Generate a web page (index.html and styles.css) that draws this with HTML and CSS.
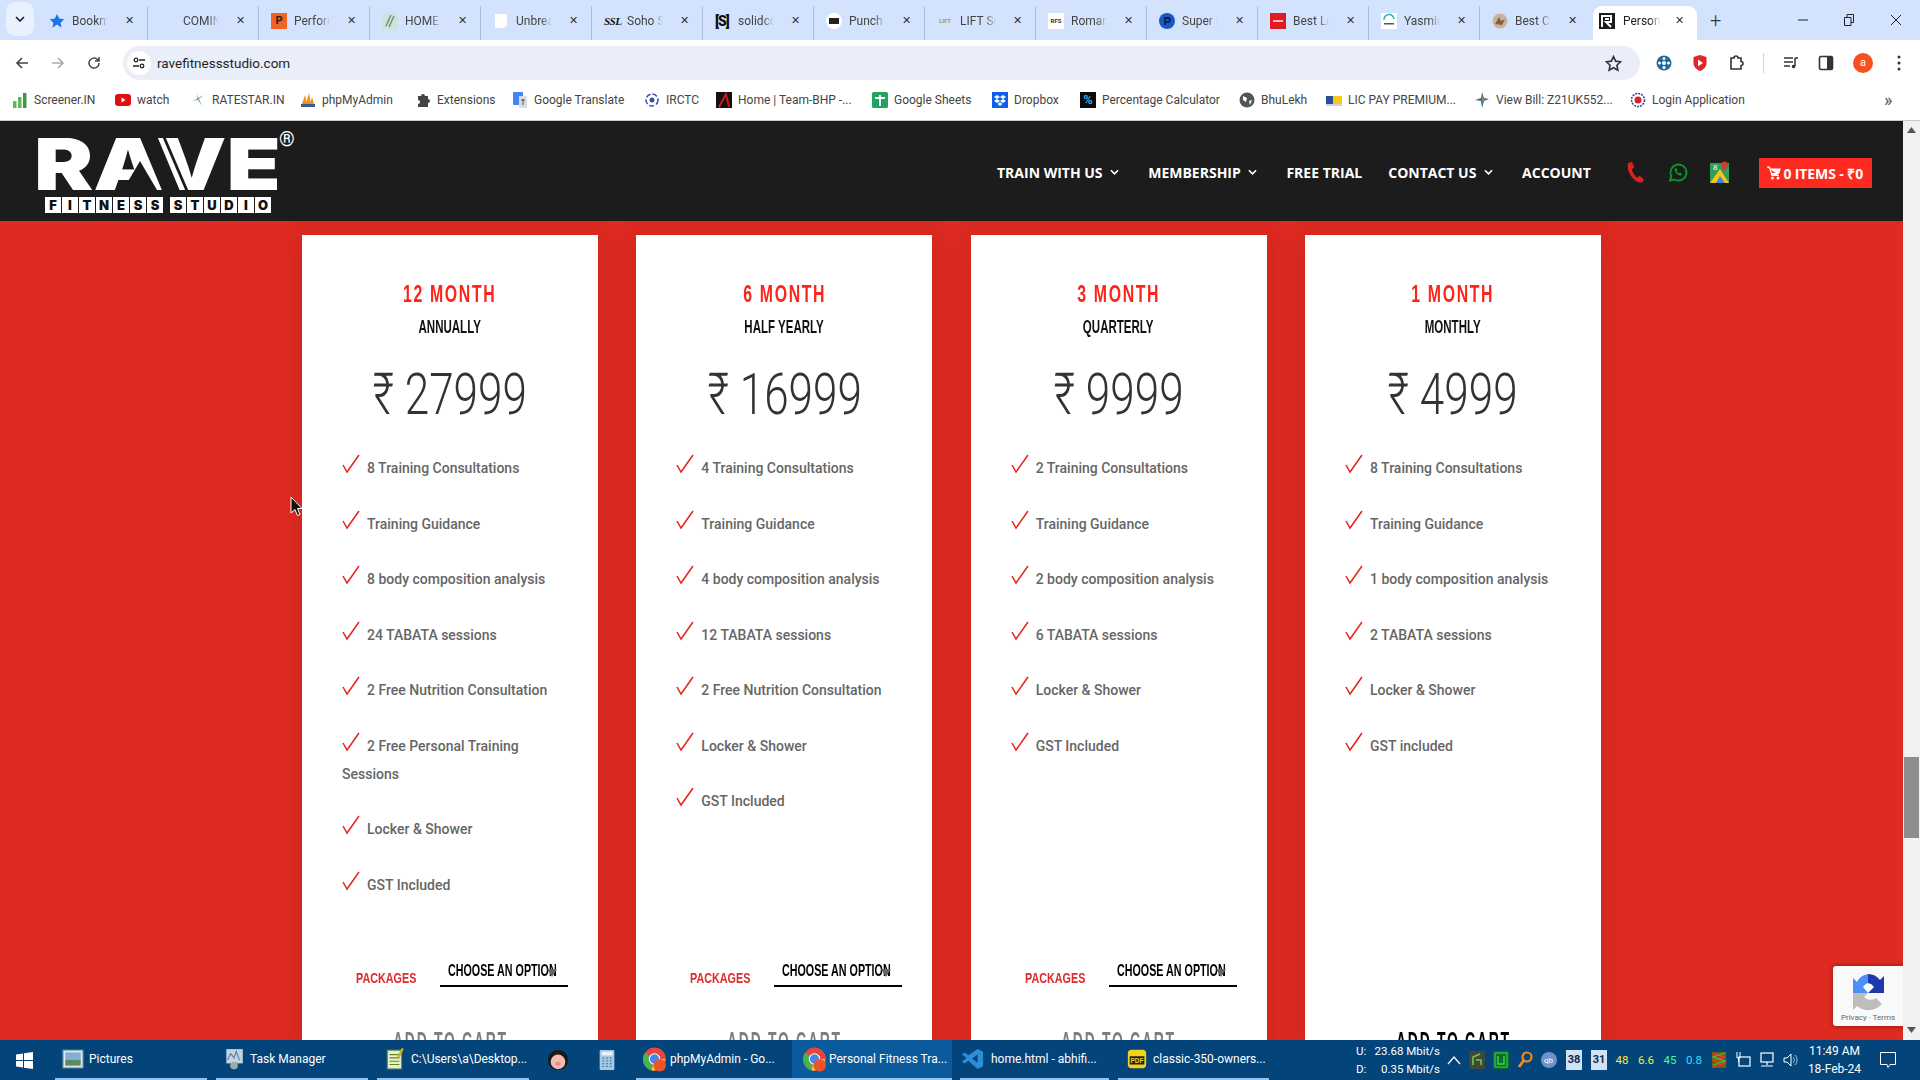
FILE: index.html
```html
<!DOCTYPE html>
<html lang="en">
<head>
<meta charset="utf-8">
<title>Personal Fitness Training</title>
<link rel="stylesheet" href="styles.css">
</head>
<body>
<div class="tabstrip">
  <div class="tabsearch"><svg width="10" height="6" viewBox="0 0 10 6"><path d="M1 1l4 4 4-4" fill="none" stroke="#1f1f1f" stroke-width="1.6"/></svg></div>
  <div class="tab"><svg class="fav" viewBox="0 0 16 16"><path d="M8 1l2.2 4.6 5 .7-3.6 3.5.9 5L8 11.4 3.500 14.800l.9-5L.8 6.300l5-.7z" fill="#1a73e8"/></svg><span class="tabt">Bookmarks</span><span class="x">✕</span></div>
  <div class="tab"><span class="fav"></span><span class="tabt">COMING SOON</span><span class="x">✕</span></div>
  <div class="tab"><span class="fav sq orange">P</span><span class="tabt">Performance</span><span class="x">✕</span></div>
  <div class="tab"><svg class="fav" viewBox="0 0 16 16"><rect width="16" height="16" fill="#cfe3da"/><path d="M4 13L9 2M7 14l5-11" stroke="#6d8a7c" stroke-width="1.400"/></svg><span class="tabt">HOME | Site</span><span class="x">✕</span></div>
  <div class="tab"><svg class="fav" viewBox="0 0 16 16"><path d="M2 1h12v12l-4 2H2z" fill="#fff"/></svg><span class="tabt">Unbreakable</span><span class="x">✕</span></div>
  <div class="tab"><span class="fav ssl">SSL</span><span class="tabt">Soho Studio</span><span class="x">✕</span></div>
  <div class="tab"><span class="fav brk">[S]</span><span class="tabt">solidcore</span><span class="x">✕</span></div>
  <div class="tab"><svg class="fav" viewBox="0 0 16 16"><circle cx="8" cy="8" r="8" fill="#fff"/><rect x="3" y="5" width="10" height="6" fill="#222"/></svg><span class="tabt">Punch Fitness</span><span class="x">✕</span></div>
  <div class="tab"><span class="fav tiny">LIFT</span><span class="tabt">LIFT Society</span><span class="x">✕</span></div>
  <div class="tab"><span class="fav tiny dark">RFS</span><span class="tabt">Roman Fitness</span><span class="x">✕</span></div>
  <div class="tab"><svg class="fav" viewBox="0 0 16 16"><circle cx="8" cy="8" r="8" fill="#1a56c4"/><path d="M6 12V5h3a2 2 0 010 4H6" fill="none" stroke="#061f55" stroke-width="1.800"/></svg><span class="tabt">Super 6 Gym</span><span class="x">✕</span></div>
  <div class="tab"><svg class="fav" viewBox="0 0 16 16"><rect width="16" height="16" fill="#e01b24"/><rect x="3" y="7" width="10" height="2" fill="#f6b7b7"/></svg><span class="tabt">Best Luxury</span><span class="x">✕</span></div>
  <div class="tab"><svg class="fav" viewBox="0 0 16 16"><rect width="16" height="16" fill="#fff"/><path d="M3 7a5 5 0 0110-1" fill="none" stroke="#2cb7a5" stroke-width="1.500"/><rect x="3" y="10" width="10" height="1.500" fill="#555"/></svg><span class="tabt">Yasmin Karachi</span><span class="x">✕</span></div>
  <div class="tab"><svg class="fav" viewBox="0 0 16 16"><circle cx="8" cy="8" r="7.500" fill="#c9b3a0"/><path d="M3 11l4-7 2 4 4-2-3 6z" fill="#8a5a3c"/></svg><span class="tabt">Best Celebrity</span><span class="x">✕</span></div>
  <div class="tab tab-active"><svg class="fav" viewBox="0 0 16 16"><rect width="16" height="16" fill="#1c1c1c"/><path d="M3 14V3h9v6H7l5 5M6 6h4" fill="none" stroke="#fff" stroke-width="2"/></svg><span class="tabt">Personal Fitness</span><span class="x">✕</span></div>
  <span class="plus">+</span>
  <div class="winctl">
    <svg width="10" height="10" viewBox="0 0 10 10"><path d="M0 5h10" stroke="#222"/></svg>
    <svg width="10" height="12" viewBox="0 0 10 12"><path d="M.5 3.500h6.500v8H.5zM3 3.500V.5h6.500v8H7" fill="none" stroke="#222"/></svg>
    <svg width="12" height="12" viewBox="0 0 12 12"><path d="M1 1l10 10M11 1L1 11" stroke="#222"/></svg>
  </div>
</div>

<div class="toolbar">
  <svg class="tb-ico" viewBox="0 0 16 16"><path d="M14 8H3M8 3L3 8l5 5" fill="none" stroke="#444" stroke-width="1.600"/></svg>
  <svg class="tb-ico" viewBox="0 0 16 16"><path d="M2 8h11M8 3l5 5-5 5" fill="none" stroke="#aaa" stroke-width="1.600"/></svg>
  <svg class="tb-ico" viewBox="0 0 16 16"><path d="M13 8a5 5 0 11-1.500-3.500L13 6M13 2v4H9" fill="none" stroke="#444" stroke-width="1.500"/></svg>
  <div class="omnibox">
    <span class="tune"><svg width="14" height="14" viewBox="0 0 14 14"><g fill="none" stroke="#222" stroke-width="1.300"><circle cx="4" cy="4" r="1.800"/><path d="M7 4h6M1 10h6"/><circle cx="10" cy="10" r="1.800"/></g></svg></span>
    <span class="url">ravefitnessstudio.com</span>
    <svg class="star" viewBox="0 0 16 16"><path d="M8 1.500l2 4.300 4.700.6-3.500 3.200.9 4.700L8 12l-4.100 2.300.9-4.700L1.300 6.400 6 5.800z" fill="none" stroke="#333" stroke-width="1.500"/></svg>
  </div>
  <div class="tb-right">
    <svg class="r1" viewBox="0 0 16 16"><circle cx="8" cy="8" r="7.500" fill="#1f6a96"/><circle cx="8" cy="8" r="2" fill="#fff"/><circle cx="8" cy="3.500" r="1.500" fill="#fff"/><circle cx="8" cy="12.500" r="1.500" fill="#fff"/><circle cx="3.500" cy="8" r="1.500" fill="#fff"/><circle cx="12.500" cy="8" r="1.500" fill="#fff"/></svg>
    <svg class="r2" viewBox="0 0 16 16"><path d="M1.500 2L8 0l6.500 2v6c0 4-3 6.500-6.500 8C4.500 14.500 1.500 12 1.500 8z" fill="#e3242b"/><path d="M6 4.500l5 3.500-5 3.500z" fill="#fff"/></svg>
    <svg class="r3" viewBox="0 0 16 16"><path d="M3 3h3a2 2 0 014 0h3v3.500a2 2 0 010 4V14H3z" fill="none" stroke="#333" stroke-width="1.600"/></svg>
    <span class="sep"></span>
    <svg class="r4" viewBox="0 0 16 16"><path d="M1 3h9M1 7h9M1 11h6M12 3h3M12 3v8" fill="none" stroke="#333" stroke-width="1.500"/><circle cx="10.500" cy="11.500" r="1.800" fill="#333"/></svg>
    <svg class="r5" viewBox="0 0 16 16"><rect x="1.500" y="1.500" width="13" height="13" rx="1.500" fill="none" stroke="#333" stroke-width="1.600"/><rect x="9" y="2" width="5" height="12" fill="#333"/></svg>
    <span class="avatar">a</span>
    <svg class="r6" viewBox="0 0 4 16"><circle cx="2" cy="2" r="1.500" fill="#333"/><circle cx="2" cy="8" r="1.500" fill="#333"/><circle cx="2" cy="14" r="1.500" fill="#333"/></svg>
  </div>
</div>

<div class="bookmarks">
  <span class="bm"><svg viewBox="0 0 16 16"><rect x="1" y="9" width="3.500" height="7" fill="#5cb85c"/><rect x="6" y="5" width="3.500" height="11" fill="#5cb85c"/><rect x="11" y="1" width="3.500" height="15" fill="#3f9a3f"/></svg>Screener.IN</span>
  <span class="bm"><svg viewBox="0 0 16 16"><rect y="2" width="16" height="12" rx="3" fill="#e01010"/><path d="M6.500 5.500l4 2.500-4 2.500z" fill="#fff"/></svg>watch</span>
  <span class="bm"><svg viewBox="0 0 16 16"><path d="M8 1l-1 6-5 2 6-1 4 6-3-7 5-4-6 3z" fill="#7d9fb8"/></svg>RATESTAR.IN</span>
  <span class="bm"><svg viewBox="0 0 16 16"><path d="M2 12L5 3l2 9zM6 12l3-11 2 11zM10 12l2-7 2 7z" fill="#f29111"/><rect x="1" y="12" width="14" height="3" fill="#3a5a98"/></svg>phpMyAdmin</span>
  <span class="bm"><svg viewBox="0 0 16 16"><path d="M3 4h3a2 2 0 014 0h3v3a2 2 0 010 4v4H3v-3a2 2 0 000-4z" fill="#444"/></svg>Extensions</span>
  <span class="bm"><svg viewBox="0 0 16 16"><rect x="1" y="0" width="10" height="13" rx="1" fill="#4285f4"/><rect x="7" y="4" width="8" height="12" rx="1" fill="#dadce0"/><path d="M9 8h4M11 7v6" stroke="#555"/></svg>Google Translate</span>
  <span class="bm"><svg viewBox="0 0 16 16"><circle cx="8" cy="8" r="6" fill="none" stroke="#3a4fa0" stroke-width="1.500" stroke-dasharray="5 2"/><circle cx="8" cy="8" r="2.500" fill="#3a4fa0"/></svg>IRCTC</span>
  <span class="bm"><svg viewBox="0 0 16 16"><rect width="16" height="16" fill="#111"/><path d="M3 15L10 2l3 13" fill="none" stroke="#d01818" stroke-width="2"/></svg>Home | Team-BHP -...</span>
  <span class="bm"><svg viewBox="0 0 16 16"><rect width="16" height="16" rx="1.500" fill="#1fa463"/><path d="M3 6h10M8 3v11" stroke="#fff" stroke-width="1.800"/></svg>Google Sheets</span>
  <span class="bm"><svg viewBox="0 0 16 16"><rect width="16" height="16" fill="#0d5fe8"/><path d="M5 3l3 2-3 2-3-2zM11 3l3 2-3 2-3-2zM5 7l3 2-3 2-3-2zM11 7l3 2-3 2-3-2zM8 10l2.500 2L8 14l-2.500-2z" fill="#fff"/></svg>Dropbox</span>
  <span class="bm"><span class="pct">%</span>Percentage Calculator</span>
  <span class="bm"><svg viewBox="0 0 16 16"><circle cx="8" cy="8" r="7.500" fill="#555"/><path d="M4 4l4 2-1 4-3-2zM10 9l3-1-2 5z" fill="#fff"/></svg>BhuLekh</span>
  <span class="bm"><svg viewBox="0 0 16 16"><rect y="4" width="7" height="8" fill="#2a4d9c"/><rect x="7" y="4" width="9" height="8" fill="#f6c915"/><rect x="0" y="12" width="16" height="2" fill="#c9d4ea"/></svg>LIC PAY PREMIUM...</span>
  <span class="bm"><svg viewBox="0 0 16 16"><path d="M8 0l2 6 5 1-5 2-2 7-1-7-6-1 6-2z" fill="#2176ae"/><path d="M8 2l1 5 3 1-4 1z" fill="#e9751e"/></svg>View Bill: Z21UK552...</span>
  <span class="bm"><svg viewBox="0 0 16 16"><circle cx="8" cy="8" r="6.500" fill="#fff" stroke="#2a3f9a" stroke-width="1.500" stroke-dasharray="2 1"/><circle cx="8" cy="8" r="3.500" fill="#d8232a"/></svg>Login Application</span>
  <span class="bm-more">»</span>
</div>

<div class="page">
  <div class="viewport">
    <header class="site-head">
      <div class="logo">
        <svg class="rave" viewBox="0 0 241 52"><text x="-3" y="52" textLength="247" lengthAdjust="spacingAndGlyphs" class="rave-t">RAVE</text><path class="rave-cut" d="M86 52l17-29 17 29z"/><path class="rave-cut" d="M125 -2l24 56h3L128 -2z"/></svg>
        <span class="reg">®</span>
        <div class="fs">
          <span>F</span><span>I</span><span>T</span><span>N</span><span>E</span><span>S</span><span>S</span><i></i><span>S</span><span>T</span><span>U</span><span>D</span><span>I</span><span>O</span>
        </div>
      </div>
      <nav class="nav">
        <a>TRAIN WITH US <svg class="chev" viewBox="0 0 10 7"><path d="M1 1l4 4 4-4" fill="none" stroke="#fff" stroke-width="1.800"/></svg></a>
        <a>MEMBERSHIP <svg class="chev" viewBox="0 0 10 7"><path d="M1 1l4 4 4-4" fill="none" stroke="#fff" stroke-width="1.800"/></svg></a>
        <a>FREE TRIAL</a>
        <a>CONTACT US <svg class="chev" viewBox="0 0 10 7"><path d="M1 1l4 4 4-4" fill="none" stroke="#fff" stroke-width="1.800"/></svg></a>
        <a>ACCOUNT</a>
      </nav>
      <div class="contact-ico">
        <svg width="21" height="21" viewBox="0 0 20 20"><path d="M3 1l3.500-1 2.500 5-2.500 2c.5 3 2.500 6 5 8l2.500-2 4 3.500-1.500 3c-7 1.500-16-10-13.500-18.500z" fill="#d9231c"/></svg>
        <svg width="20" height="21" viewBox="0 0 20 20"><path d="M2 18l1.300-4.500A8 8 0 1110 18a8 8 0 01-3.700-1z" fill="none" stroke="#0a9a2c" stroke-width="1.800"/><path d="M7 6c-1.500 2 2.500 7.500 6 7l1-1.500-2-1.500-1 1c-1-.5-2-1.500-2.500-2.500l1-1-1.200-2z" fill="#0a9a2c"/></svg>
        <svg width="22" height="23" viewBox="0 0 22 23"><rect y="2" width="19" height="20" fill="#2e9e5b"/><path d="M0 22L10 8l9 14z" fill="#f3c614"/><path d="M6 22l4-7 5 7z" fill="#3f82e0"/><path d="M14 10c-3-4-3-5-3-6a3.500 3.500 0 017 0c0 2-2 4-4 6z" fill="#c8402f"/><text x="3" y="9" class="g8">8</text></svg>
      </div>
      <div class="cart"><svg width="14" height="14" viewBox="0 0 14 14"><path d="M0 1h2.500L5 9.500h7M3 3h10l-1.500 4.500H4.200" fill="#fff" stroke="#fff" stroke-width="1.200"/><circle cx="5.500" cy="12" r="1.500" fill="#fff"/><circle cx="11" cy="12" r="1.500" fill="#fff"/></svg>0 ITEMS - ₹0</div>
    </header>

    <main class="pricing">
      <section class="card">
        <h3 class="term"><span>12 MONTH</span></h3>
        <p class="sub"><span>ANNUALLY</span></p>
        <p class="price"><span>₹ 27999</span></p>
        <ul class="feat">
          <li><svg class="chk" viewBox="0 0 18 20"><path d="M1 11l4 7L17 1" fill="none" stroke="#e8221a" stroke-width="1.500"/></svg>8 Training Consultations</li>
          <li><svg class="chk" viewBox="0 0 18 20"><path d="M1 11l4 7L17 1" fill="none" stroke="#e8221a" stroke-width="1.500"/></svg>Training Guidance</li>
          <li><svg class="chk" viewBox="0 0 18 20"><path d="M1 11l4 7L17 1" fill="none" stroke="#e8221a" stroke-width="1.500"/></svg>8 body composition analysis</li>
          <li><svg class="chk" viewBox="0 0 18 20"><path d="M1 11l4 7L17 1" fill="none" stroke="#e8221a" stroke-width="1.500"/></svg>24 TABATA sessions</li>
          <li><svg class="chk" viewBox="0 0 18 20"><path d="M1 11l4 7L17 1" fill="none" stroke="#e8221a" stroke-width="1.500"/></svg>2 Free Nutrition Consultation</li>
          <li><svg class="chk" viewBox="0 0 18 20"><path d="M1 11l4 7L17 1" fill="none" stroke="#e8221a" stroke-width="1.500"/></svg>2 Free Personal Training Sessions</li>
          <li><svg class="chk" viewBox="0 0 18 20"><path d="M1 11l4 7L17 1" fill="none" stroke="#e8221a" stroke-width="1.500"/></svg>Locker &amp; Shower</li>
          <li><svg class="chk" viewBox="0 0 18 20"><path d="M1 11l4 7L17 1" fill="none" stroke="#e8221a" stroke-width="1.500"/></svg>GST Included</li>
        </ul>
        <div class="opt"><span class="pk"><b>PACKAGES</b></span><span class="sel"><b>CHOOSE AN OPTION</b><svg class="arr" viewBox="0 0 10 8"><path d="M0 0h10L5 8z" fill="#666"/></svg></span></div>
        <div class="add off"><span>ADD TO CART</span></div>
      </section>
      <section class="card">
        <h3 class="term"><span>6 MONTH</span></h3>
        <p class="sub"><span>HALF YEARLY</span></p>
        <p class="price"><span>₹ 16999</span></p>
        <ul class="feat">
          <li><svg class="chk" viewBox="0 0 18 20"><path d="M1 11l4 7L17 1" fill="none" stroke="#e8221a" stroke-width="1.500"/></svg>4 Training Consultations</li>
          <li><svg class="chk" viewBox="0 0 18 20"><path d="M1 11l4 7L17 1" fill="none" stroke="#e8221a" stroke-width="1.500"/></svg>Training Guidance</li>
          <li><svg class="chk" viewBox="0 0 18 20"><path d="M1 11l4 7L17 1" fill="none" stroke="#e8221a" stroke-width="1.500"/></svg>4 body composition analysis</li>
          <li><svg class="chk" viewBox="0 0 18 20"><path d="M1 11l4 7L17 1" fill="none" stroke="#e8221a" stroke-width="1.500"/></svg>12 TABATA sessions</li>
          <li><svg class="chk" viewBox="0 0 18 20"><path d="M1 11l4 7L17 1" fill="none" stroke="#e8221a" stroke-width="1.500"/></svg>2 Free Nutrition Consultation</li>
          <li><svg class="chk" viewBox="0 0 18 20"><path d="M1 11l4 7L17 1" fill="none" stroke="#e8221a" stroke-width="1.500"/></svg>Locker &amp; Shower</li>
          <li><svg class="chk" viewBox="0 0 18 20"><path d="M1 11l4 7L17 1" fill="none" stroke="#e8221a" stroke-width="1.500"/></svg>GST Included</li>
        </ul>
        <div class="opt"><span class="pk"><b>PACKAGES</b></span><span class="sel"><b>CHOOSE AN OPTION</b><svg class="arr" viewBox="0 0 10 8"><path d="M0 0h10L5 8z" fill="#666"/></svg></span></div>
        <div class="add off"><span>ADD TO CART</span></div>
      </section>
      <section class="card">
        <h3 class="term"><span>3 MONTH</span></h3>
        <p class="sub"><span>QUARTERLY</span></p>
        <p class="price"><span>₹ 9999</span></p>
        <ul class="feat">
          <li><svg class="chk" viewBox="0 0 18 20"><path d="M1 11l4 7L17 1" fill="none" stroke="#e8221a" stroke-width="1.500"/></svg>2 Training Consultations</li>
          <li><svg class="chk" viewBox="0 0 18 20"><path d="M1 11l4 7L17 1" fill="none" stroke="#e8221a" stroke-width="1.500"/></svg>Training Guidance</li>
          <li><svg class="chk" viewBox="0 0 18 20"><path d="M1 11l4 7L17 1" fill="none" stroke="#e8221a" stroke-width="1.500"/></svg>2 body composition analysis</li>
          <li><svg class="chk" viewBox="0 0 18 20"><path d="M1 11l4 7L17 1" fill="none" stroke="#e8221a" stroke-width="1.500"/></svg>6 TABATA sessions</li>
          <li><svg class="chk" viewBox="0 0 18 20"><path d="M1 11l4 7L17 1" fill="none" stroke="#e8221a" stroke-width="1.500"/></svg>Locker &amp; Shower</li>
          <li><svg class="chk" viewBox="0 0 18 20"><path d="M1 11l4 7L17 1" fill="none" stroke="#e8221a" stroke-width="1.500"/></svg>GST Included</li>
        </ul>
        <div class="opt"><span class="pk"><b>PACKAGES</b></span><span class="sel"><b>CHOOSE AN OPTION</b><svg class="arr" viewBox="0 0 10 8"><path d="M0 0h10L5 8z" fill="#666"/></svg></span></div>
        <div class="add off"><span>ADD TO CART</span></div>
      </section>
      <section class="card">
        <h3 class="term"><span>1 MONTH</span></h3>
        <p class="sub"><span>MONTHLY</span></p>
        <p class="price"><span>₹ 4999</span></p>
        <ul class="feat">
          <li><svg class="chk" viewBox="0 0 18 20"><path d="M1 11l4 7L17 1" fill="none" stroke="#e8221a" stroke-width="1.500"/></svg>8 Training Consultations</li>
          <li><svg class="chk" viewBox="0 0 18 20"><path d="M1 11l4 7L17 1" fill="none" stroke="#e8221a" stroke-width="1.500"/></svg>Training Guidance</li>
          <li><svg class="chk" viewBox="0 0 18 20"><path d="M1 11l4 7L17 1" fill="none" stroke="#e8221a" stroke-width="1.500"/></svg>1 body composition analysis</li>
          <li><svg class="chk" viewBox="0 0 18 20"><path d="M1 11l4 7L17 1" fill="none" stroke="#e8221a" stroke-width="1.500"/></svg>2 TABATA sessions</li>
          <li><svg class="chk" viewBox="0 0 18 20"><path d="M1 11l4 7L17 1" fill="none" stroke="#e8221a" stroke-width="1.500"/></svg>Locker &amp; Shower</li>
          <li><svg class="chk" viewBox="0 0 18 20"><path d="M1 11l4 7L17 1" fill="none" stroke="#e8221a" stroke-width="1.500"/></svg>GST included</li>
        </ul>
        <div class="opt"></div>
        <div class="add"><span>ADD TO CART</span></div>
      </section>
    </main>

    <svg class="cursor" width="13" height="21" viewBox="0 0 13 21"><path d="M1 1v16l4-3.500 2.500 6 2.500-1-2.500-6H12z" fill="#111" stroke="#fff"/></svg>

    <div class="recaptcha">
      <svg width="40" height="40" viewBox="0 0 40 40">
        <path d="M5 21V6l4 4A15 15 0 0120 2v9a9 9 0 00-5 4l5 6z" fill="#4a90f8"/>
        <path d="M20 2a15 15 0 0112 6l4-4v17H20l6-6a9 9 0 00-6-4z" fill="#1c3aa9"/>
        <path d="M5 21h15l-4 4a9 9 0 0012 1l6 6a18 18 0 01-25 2l-4 4z" fill="#bdbdbd"/>
      </svg>
      <span class="rc-t">Privacy · Terms</span>
    </div>
  </div>
  <div class="scrollbar">
    <svg width="9" height="6" viewBox="0 0 9 6"><path d="M4.500 0L9 6H0z" fill="#555"/></svg>
    <div class="track"><div class="thumb"></div></div>
    <svg width="9" height="6" viewBox="0 0 9 6"><path d="M0 0h9L4.500 6z" fill="#555"/></svg>
  </div>
</div>

<footer class="taskbar">
  <svg class="win" width="17" height="17" viewBox="0 0 17 17"><path d="M0 2.500l7-1v6.500H0zM8 1.300L17 0v8H8zM0 9h7v6.500l-7-1zM8 9h9v8l-9-1.300z" fill="#fff"/></svg>
  <div class="tk w152"><svg viewBox="0 0 20 20"><rect x="1" y="2" width="18" height="16" fill="#dfe8f2" stroke="#8aa"/><rect x="3" y="4" width="14" height="8" fill="#7fb0d8"/><rect x="3" y="11" width="14" height="5" fill="#5c8a5a"/></svg>Pictures</div>
  <div class="tk w152"><svg viewBox="0 0 20 20"><rect x="3" y="1" width="15" height="13" fill="#c6d3df"/><path d="M4 11l3-6 3 4 2-6 3 8" fill="none" stroke="#4a7fb5"/><circle cx="10" cy="16" r="3.500" fill="#9aa"/></svg>Task Manager</div>
  <div class="tk w152 tk-last"><svg viewBox="0 0 20 20"><rect x="3" y="2" width="13" height="17" fill="#e8f0c8" stroke="#686"/><path d="M5 6h9M5 9h9M5 12h9M5 15h9" stroke="#5a8a2a"/><path d="M16 0l2 1-4 8-2-1z" fill="#c9b21c"/></svg>C:\Users\a\Desktop...</div>
  <div class="tk-i"><svg viewBox="0 0 24 24"><circle cx="12" cy="12" r="11" fill="#1a1a1a"/><circle cx="12" cy="14" r="8" fill="#f4b9b0"/><ellipse cx="12" cy="16" rx="3" ry="2" fill="#e88"/></svg></div>
  <div class="tk-i tk-i-last"><svg viewBox="0 0 24 24"><rect x="4" y="1" width="16" height="22" rx="1" fill="#a5c8e4"/><rect x="6" y="3" width="12" height="4" fill="#e8f2fa"/><path d="M7 10h10M7 13h10M7 16h10M7 19h10" stroke="#527fa8" stroke-width="1.500" stroke-dasharray="2 2"/></svg></div>
  <div class="tk w156 badge"><svg viewBox="0 0 24 24"><circle cx="12" cy="12" r="11" fill="#e8453c"/><path d="M12 12l-9-6a11 11 0 006 17z" fill="#4caf50"/><path d="M12 12h10a11 11 0 01-13 11z" fill="#fbc02d"/><circle cx="12" cy="12" r="5" fill="#4285f4" stroke="#fff"/><circle cx="17" cy="18" r="6" fill="#e8562a"/></svg>phpMyAdmin - Go...</div>
  <div class="tk w160 tk-on badge"><svg viewBox="0 0 24 24"><circle cx="12" cy="12" r="11" fill="#e8453c"/><path d="M12 12l-9-6a11 11 0 006 17z" fill="#4caf50"/><path d="M12 12h10a11 11 0 01-13 11z" fill="#fbc02d"/><circle cx="12" cy="12" r="5" fill="#4285f4" stroke="#fff"/><circle cx="17" cy="18" r="6" fill="#e8562a"/></svg>Personal Fitness Tra...</div>
  <div class="tk w157"><svg viewBox="0 0 24 24"><path d="M17 1l6 3v16l-6 3L7 14l-4 3-3-2 5-4-5-4 3-2 4 3zM17 7l-6 4.500 6 4.500z" fill="#2b8fd8"/></svg>home.html - abhifi...</div>
  <div class="tk w151"><svg viewBox="0 0 24 24"><rect x="2" y="2" width="20" height="20" rx="4" fill="#f3d21a"/><rect x="4" y="9" width="16" height="9" fill="#222"/><text x="5" y="16" class="pdf">PDF</text></svg>classic-350-owners...</div>

  <div class="tray">
    <div class="net">
      <div class="net-row"><span>U:</span><span>23.68 Mbit/s</span></div>
      <div class="net-row"><span>D:</span><span>0.35 Mbit/s</span></div>
    </div>
    <svg class="tr-chev" width="14" height="9" viewBox="0 0 14 9"><path d="M1 8l6-7 6 7" fill="none" stroke="#fff" stroke-width="1.200"/></svg>
    <svg class="tr" viewBox="0 0 16 18"><rect width="16" height="18" fill="#3c4a3c"/><path d="M4 14V6l7-3M7 9h5v5" fill="none" stroke="#7cc142" stroke-width="1.600"/></svg>
    <svg class="tr" viewBox="0 0 16 18"><rect width="16" height="18" rx="2" fill="#0e6e2a"/><rect x="2" y="2" width="12" height="14" fill="none" stroke="#3bd14f"/><path d="M5 5v8h6V5" fill="none" stroke="#3bd14f" stroke-width="1.500"/></svg>
    <svg class="tr" viewBox="0 0 16 18"><circle cx="10" cy="6" r="4.500" fill="none" stroke="#f08a1c" stroke-width="2.200"/><path d="M7 9l-5 7" stroke="#f08a1c" stroke-width="3"/></svg>
    <svg class="tr" viewBox="0 0 16 18"><circle cx="8" cy="9" r="8" fill="#6d94c9"/><text x="3" y="12" class="qb">qb</text></svg>
    <span class="cal">38</span>
    <span class="cal">31</span>
    <span class="stat yl">48</span><span class="stat yl">6.6</span><span class="stat gr">45</span><span class="stat cy">0.8</span>
    <svg class="tr" viewBox="0 0 16 18"><rect x="1" y="1" width="14" height="16" fill="#7a5a12"/><path d="M2 3l12 3L2 9l12 3-12 4" fill="none" stroke="#e33" stroke-width="1.500"/><path d="M14 2L2 6l12 4-12 4" fill="none" stroke="#3c3" stroke-width="1.200"/></svg>
    <svg class="tr" viewBox="0 0 16 18"><rect x="4" y="6" width="11" height="9" fill="none" stroke="#fff" stroke-width="1.200"/><path d="M2 1v6h3V1M3.500 7v4" stroke="#fff" fill="none"/></svg>
    <svg class="tr" viewBox="0 0 16 18"><rect x="2" y="2" width="12" height="9" fill="none" stroke="#fff" stroke-width="1.200"/><path d="M8 11v3M2 15h12" stroke="#fff" stroke-width="1.200"/></svg>
    <svg class="tr" viewBox="0 0 16 18"><path d="M1 7h3l4-4v12l-4-4H1z" fill="none" stroke="#fff"/><path d="M10 6a4 4 0 010 6M12 4a7 7 0 010 10" fill="none" stroke="#cde" stroke-width=".8"/></svg>
    <div class="clock"><span>11:49 AM</span><span>18-Feb-24</span></div>
    <svg class="notif" width="16" height="16" viewBox="0 0 16 16"><path d="M.5.500h15v12H10l-2 3-1-3H.5z" fill="none" stroke="#fff"/></svg>
  </div>
</footer>
</body>
</html>
```

FILE: styles.css
```css
* { box-sizing: border-box; }
html, body { margin: 0; padding: 0; }
body {
  width: 1920px; height: 1080px; overflow: hidden;
  display: flex; flex-direction: column;
  font-family: "Roboto", "Liberation Sans", sans-serif;
  background: #fff;
}

/* tab strip */
.tabstrip { height: 40px; flex: none; background: #d3e3fd; display: flex; align-items: center; padding-left: 6px; position: relative; }
.tabsearch { width: 28px; height: 34px; margin-top: -2px; margin-right: 3px; border-radius: 9px; background: #e9f1fe; display: flex; align-items: center; justify-content: center; }
.tab { width: 111px; height: 34px; margin-top: 6px; flex: none; display: flex; align-items: center; padding-left: 12px; position: relative; border-right: 1px solid #a8c0e4; font-size: 12px; color: #3e4450; background-clip: padding-box; }
.tab .fav { width: 16px; height: 16px; flex: none; margin-right: 7px; margin-top: -5px; }
.tabt { width: 36px; overflow: hidden; white-space: nowrap; margin-top: -5px; color: #444; mask-image: linear-gradient(to right, #000 70%, transparent); }
.x { font-size: 11px; font-weight: 500; margin-left: 17px; margin-top: -5px; color: #333; }
.tab:nth-child(15) { border-right: 0; }
.tab-active { width: 104px; margin-left: 2px; background: #fff; border-right: 0; border-radius: 9px 9px 0 0; padding-left: 6px; }
.tab-active .fav, .tab-active .tabt, .tab-active .x { margin-top: -5px; }
.tab-active .fav { margin-right: 8px; }
.tab-active .tabt { width: 38px; color: #222; }
.tab-active .x { margin-left: 14px; }
.plus { font-size: 20px; color: #333; margin-left: 13px; width: 14px; line-height: 20px; font-weight: 300; }
.winctl { margin-left: auto; margin-right: 18px; display: flex; gap: 36px; align-items: center; }
.sq { display: flex; align-items: center; justify-content: center; font-size: 11px; font-weight: 700; }
.orange { background: #ee6420; color: #222; }
.ssl { font: italic 900 11px "Liberation Serif", serif; color: #111; line-height: 16px; letter-spacing: -.5px; }
.brk { font-size: 14px; font-weight: 900; line-height: 16px; color: #111; letter-spacing: -1px; }
.tiny { font-size: 6px; font-weight: 700; line-height: 16px; color: #9a9a80; text-align: center; }
.tiny.dark { color: #333; background: #fff; }

/* toolbar */
.toolbar { height: 40px; flex: none; background: #fff; display: flex; align-items: center; padding-left: 14px; position: relative; border-radius: 8px 8px 0 0; }
.tb-ico { width: 16px; height: 16px; margin-right: 20px; margin-top: 6px; flex: none; }
.omnibox { width: 1517px; height: 34px; margin-left: 1px; margin-top: 6px; background: #e9eef8; border-radius: 17px; display: flex; align-items: center; padding-left: 4px; flex: none; }
.tune { width: 24px; height: 24px; border-radius: 50%; background: #fff; display: flex; align-items: center; justify-content: center; }
.url { font-size: 13.500px; color: #1f1f1f; margin-left: 6px; }
.star { width: 17px; height: 17px; margin-left: auto; margin-right: 18px; }
.tb-right { flex: none; display: flex; align-items: center; margin-top: 6px; margin-left: 16px; }
.tb-right svg { flex: none; }
.r1 { width: 16px; height: 16px; }
.r2 { width: 16px; height: 18px; margin-left: 20px; }
.r3 { width: 16px; height: 16px; margin-left: 20px; }
.sep { width: 1px; height: 20px; background: #c8d6ea; margin-left: 19px; }
.r4 { width: 16px; height: 16px; margin-left: 19px; }
.r5 { width: 16px; height: 16px; margin-left: 19px; }
.avatar { width: 20px; height: 20px; border-radius: 50%; background: #f4511e; color: #fff; font-size: 11px; text-align: center; line-height: 20px; margin-left: 19px; flex: none; }
.r6 { width: 4px; height: 16px; margin-left: 24px; }

/* bookmarks */
.bookmarks { height: 41px; flex: none; background: #fff; border-bottom: 1px solid #c9c9c9; display: grid; grid-template-columns: 103px 75px 110px 115px 97px 132px 72px 156px 120px 88px 159px 87px 148px 156px 1fr 36px; align-items: center; padding-left: 12px; font-size: 12px; color: #444; }
.bm { display: flex; align-items: center; white-space: nowrap; gap: 6px; }
.bm svg { width: 16px; height: 16px; flex: none; }
.pct { width: 16px; height: 16px; background: #0b0b0b; color: #31a8e8; font-size: 13px; font-weight: 700; line-height: 16px; text-align: center; flex: none; }
.bm-more { font-size: 18px; color: #555; line-height: 18px; }

/* page */
.page { flex: 1; min-height: 0; display: flex; }
.viewport { flex: 1; min-width: 0; position: relative; overflow: hidden; background: #de2a20; display: flex; flex-direction: column; }
.scrollbar { width: 17px; flex: none; background: #f1f1f1; display: flex; flex-direction: column; align-items: center; padding: 6px 0 7px; }
.track { flex: 1; width: 100%; padding-top: 623.500px; }
.thumb { height: 81px; margin: 0 1px; background: #8d8d8d; }

.site-head { height: 100px; flex: none; background: #1c1c1c; display: flex; align-items: center; padding: 4px 0 0 37px; }
.logo { width: 260px; height: 75px; margin-top: 5px; position: relative; flex: none; }
.rave { width: 241px; height: 52px; display: block; overflow: visible; }
.rave-t { font: 900 72px "Inter", "Liberation Sans", sans-serif; fill: #fff; }
.rave-cut { fill: #1c1c1c; }
.reg { position: absolute; left: 242px; top: -9px; color: #fff; font-size: 20px; line-height: 20px; }
.fs { display: flex; gap: 1px; width: 226px; height: 16px; margin: 7px 0 0 8px; }
.fs span { flex: 1; background: #fff; color: #111; font: 900 13px/16px "Inter", "Liberation Sans", sans-serif; text-align: center; }
.fs i { width: 5px; flex: none; }
.nav { display: flex; margin: -2px 0 0 700px; color: #fff; font: 700 14px "Open Sans", sans-serif; flex: none; }
.nav a { display: flex; align-items: center; white-space: pre; margin-right: 26px; }
.nav a .chev { width: 9px; height: 7px; margin-left: 4px; margin-right: 3px; }
.contact-ico { display: flex; align-items: center; gap: 22px; margin: -2px 0 0 8px; flex: none; }
.cart { height: 30px; width: 113px; margin-left: 27px; background: #ff2a1f; color: #fff; display: flex; align-items: center; justify-content: center; gap: 2px; font: 700 14px "Open Sans", sans-serif; letter-spacing: -.1px; flex: none; white-space: nowrap; }

.pricing { flex: 1; min-height: 0; display: flex; align-items: flex-start; gap: 38.330px; padding: 14px 0 0 302px; }
.card { width: 296px; height: 818px; flex: none; background: #fff; box-shadow: 0 0 25px rgba(0,0,0,.1); display: flex; flex-direction: column; padding: 46px 40px 0; }
.term, .sub, .price { margin: 0; text-align: center; }
.term span, .sub span, .add span { display: inline-block; white-space: nowrap; }
.term { font: 700 24px/26px "Liberation Sans", sans-serif; color: #ff2419; letter-spacing: 2.500px; }
.term span { transform: scaleX(.66); }
.sub { font: 700 18px/22px "Liberation Sans", sans-serif; color: #111; margin-top: 9px; }
.sub span { transform: scaleX(.64); }
.price { font: 300 58px/70px "Roboto", sans-serif; color: #333; margin-top: 21px; }
.price span { display: inline-block; transform: scaleX(.76); white-space: nowrap; }
.feat { list-style: none; margin: 25px 0 0; padding: 0; flex: 1; font-size: 14px; line-height: 28px; font-weight: 500; color: #666; }
.feat li { margin-bottom: 27.500px; }
.chk { width: 18px; height: 20px; margin-right: 7px; vertical-align: -1px; }
.opt { display: flex; align-items: flex-start; gap: 25px; padding-left: 14px; flex: none; height: 72px; }
.pk { font: 700 15px/20px "Liberation Sans", sans-serif; color: #e22a2a; margin-top: 11px; width: 59px; white-space: nowrap; flex: none; }
.pk b, .sel b { display: inline-block; font-weight: 700; transform-origin: left center; }
.pk b { transform: scaleX(.72); }
.sel b { transform: scaleX(.65); }
.sel { width: 128px; height: 30px; border-bottom: 2px solid #000; position: relative; font: 700 16.500px/26px "Liberation Sans", sans-serif; color: #000; padding-left: 8px; white-space: nowrap; flex: none; }
.arr { position: absolute; width: 10px; height: 8px; right: 11px; top: 12px; }
.add { font: 700 25px/24px "Liberation Sans", sans-serif; letter-spacing: 3px; text-align: center; color: #000; }
.add span { transform: scaleX(.56); }
.add.off { opacity: .5; }

.cursor { position: absolute; left: 290px; top: 375px; }

.recaptcha { position: absolute; right: 0; top: 845px; width: 70px; height: 60px; background: #f9f9f9; border-radius: 3px 0 0 3px; box-shadow: 0 0 5px rgba(0,0,0,.4); display: flex; flex-direction: column; align-items: center; padding-top: 6px; }
.rc-t { font-size: 8px; color: #666; white-space: nowrap; margin-top: 1px; line-height: 10px; }

/* taskbar */
.taskbar { height: 40px; flex: none; background: #03447a; display: flex; align-items: stretch; color: #fff; font-size: 12px; padding-left: 16px; }
.win { align-self: center; margin-right: 22px; flex: none; }
.tk { margin-right: 9px; border-bottom: 2px solid #8fc4f0; display: flex; align-items: center; padding-left: 7px; gap: 5px; white-space: nowrap; flex: none; }
.tk svg { width: 22px; height: 24px; flex: none; }
.w152 { width: 152px; }
.tk-last { margin-right: 4px; }
.w156 { width: 156px; margin-right: 0; padding-left: 6px; gap: 3px; }
.w160 { width: 160px; margin-right: 8px; padding-left: 10px; gap: 2px; }
.w157 { width: 149px; margin-right: 9px; padding-left: 2px; gap: 7px; }
.w151 { width: 151px; margin-right: 0; padding-left: 8px; }
.badge svg { width: 25px; height: 26px; }
.tk-on { background: #0b5a9c; }
.tk-i { width: 49px; display: flex; align-items: center; justify-content: center; flex: none; }
.tk-i-last { margin-right: 5px; }
.tk-i svg { width: 22px; height: 24px; }
.tray { margin-left: auto; display: flex; align-items: center; padding-right: 24px; flex: none; }
.net { font-size: 11.500px; line-height: 18px; width: 84px; }
.net-row { display: flex; justify-content: space-between; }
.tr-chev { margin-left: 7px; }
.tr { width: 16px; height: 18px; margin-left: 8px; flex: none; }
.cal { width: 16px; height: 20px; background: #cfe2f6; color: #13294b; font-size: 11px; font-weight: 700; line-height: 20px; text-align: center; margin-left: 9px; flex: none; }
.stat { font-size: 11.500px; width: 18px; text-align: center; margin-left: 6px; flex: none; }
.yl { color: #ffe93b; }
.gr { color: #3dfd8f; }
.cy { color: #39dcf7; }
.clock { width: 65px; margin-left: 3px; display: flex; flex-direction: column; align-items: center; font-size: 12px; line-height: 18px; flex: none; }
.notif { margin-left: 13px; flex: none; }

.g8 { font-size: 8px; fill: #fff; }
.pdf { font: 700 7px "Liberation Sans", sans-serif; fill: #f3d21a; }
.qb { font-size: 8px; fill: #fff; }
```
